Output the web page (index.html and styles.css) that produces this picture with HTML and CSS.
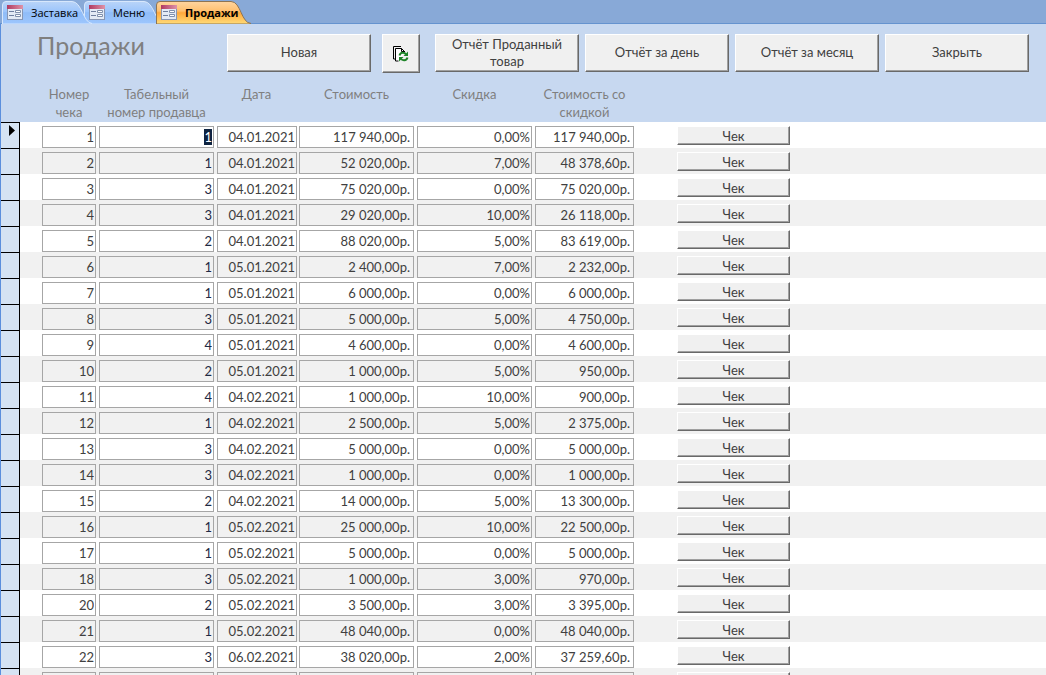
FILE: index.html
```html
<!DOCTYPE html>
<html lang="ru">
<head>
<meta charset="utf-8">
<title>Продажи</title>
<link rel="stylesheet" href="styles.css">
</head>
<body>
<svg class="defs" width="0" height="0" aria-hidden="true">
  <defs>
    <linearGradient id="tab-blue" x1="0" y1="0" x2="0" y2="1">
      <stop offset="0" stop-color="#b9d4f8"/><stop offset=".45" stop-color="#9cc5fc"/><stop offset=".5" stop-color="#8fbcf8"/><stop offset="1" stop-color="#9dc6fd"/>
    </linearGradient>
    <linearGradient id="tab-orange" x1="0" y1="0" x2="0" y2="1">
      <stop offset="0" stop-color="#ffd5a0"/><stop offset=".42" stop-color="#ffc070"/><stop offset=".5" stop-color="#ffa83c"/><stop offset="1" stop-color="#ffdc78"/>
    </linearGradient>
    <linearGradient id="form-cap" x1="0" y1="0" x2="1" y2="0">
      <stop offset="0" stop-color="#b03a62"/><stop offset="1" stop-color="#de93a8"/>
    </linearGradient>
    <symbol id="form-icon" viewBox="0 0 16 15">
      <rect x=".5" y=".5" width="15" height="14" fill="#e3eaf5" stroke="#8796b3"/>
      <rect width="16" height="4" fill="url(#form-cap)"/>
      <path d="M2 6.500h5M2 10.500h5" stroke="#6f7f9f"/>
      <path d="M8.500 5.500h5v2h-5zM8.500 9.500h5v2h-5z" fill="#fff" stroke="#8090ac"/>
    </symbol>
  </defs>
</svg>

<nav class="tabs" aria-label="Открытые формы">
  <button class="tab tab-first" type="button">
    <svg class="tab-shape" viewBox="0 0 90 24" preserveAspectRatio="none" aria-hidden="true"><path d="M.5 24V5Q.5 1.500 4 1.500H70C80 1.500 81 23 90 23.500V24Z" fill="url(#tab-blue)" stroke="#d7e7fc"/></svg>
    <svg class="tab-icon" aria-hidden="true"><use href="#form-icon"/></svg>
    <span>Заставка</span>
  </button>
  <button class="tab tab-second" type="button">
    <svg class="tab-shape" viewBox="0 0 80 24" preserveAspectRatio="none" aria-hidden="true"><path d="M.5 24V5Q.5 1.500 4 1.500H60C70 1.500 71 23 80 23.500V24Z" fill="url(#tab-blue)" stroke="#d7e7fc"/></svg>
    <svg class="tab-icon" aria-hidden="true"><use href="#form-icon"/></svg>
    <span>Меню</span>
  </button>
  <button class="tab tab-active" type="button" aria-current="page">
    <svg class="tab-shape" viewBox="0 0 95 24" preserveAspectRatio="none" aria-hidden="true"><path d="M.5 24V5Q.5 1.500 4 1.500H75C85 1.500 85 23 95 23.500V24Z" fill="url(#tab-orange)" stroke="#8e7452"/></svg>
    <svg class="tab-icon" aria-hidden="true"><use href="#form-icon"/></svg>
    <span>Продажи</span>
  </button>
</nav>

<main class="form">
  <header class="form-header">
    <h1 class="title">Продажи</h1>
    <div class="toolbar">
      <button class="command" type="button">Новая</button>
      <button class="command command-icon" type="button" aria-label="Обновить">
        <svg width="18" height="18" viewBox="0 0 18 18" fill="none" aria-hidden="true">
          <path d="M3 14H1.500V1.500H9" stroke="#000"/>
          <path d="M6.500 16H3.500V3.500H9.500L13 7" fill="#fff" stroke="#000"/>
          <path d="M9.500 3.500V6.500H12.500" stroke="#000"/>
          <path d="M7.500 10.500C8.500 7 12.500 7 14 9.500M15.500 12.500C14.500 16 10.500 16 8.500 13.500" stroke="#1e8428" stroke-width="2"/>
          <path d="M16 6.500V11H11.500ZM7 16.500V12H11.500Z" fill="#1e8428"/>
        </svg>
      </button>
      <button class="command" type="button">Отчёт Проданный товар</button>
      <button class="command" type="button">Отчёт за день</button>
      <button class="command" type="button">Отчёт за месяц</button>
      <button class="command" type="button">Закрыть</button>
    </div>
  </header>

  <table class="records">
    <colgroup>
      <col class="col-selector"><col class="col-number"><col class="col-wide"><col class="col-date"><col class="col-wide"><col class="col-wide"><col class="col-total"><col>
    </colgroup>
    <thead>
      <tr>
        <td></td>
        <th class="head-number" scope="col">Номер чека</th>
        <th scope="col">Табельный<br>номер продавца</th>
        <th scope="col">Дата</th>
        <th scope="col">Стоимость</th>
        <th scope="col">Скидка</th>
        <th scope="col">Стоимость со скидкой</th>
        <td></td>
      </tr>
    </thead>
    <tbody id="records"></tbody>
  </table>
</main>
<script src="records.js"></script>
</body>
</html>
```

FILE: styles.css
```css
* {
  box-sizing: border-box;
}

body {
  margin: 0;
  height: 100vh;
  overflow: hidden;
  display: flex;
  flex-direction: column;
  background: #fff;
  color: #404040;
  font-family: Lato, "Open Sans", sans-serif;
  font-size: 13px;
}

.defs {
  position: absolute;
}

.tabs {
  flex: none;
  display: flex;
  height: 24px;
  padding-left: 2px;
  background: #88a9d7;
  border-bottom: 1px solid #6593cf;
}

.tab {
  position: relative;
  display: flex;
  align-items: center;
  gap: 8px;
  height: 24px;
  padding: 0 0 0 5px;
  border: 0;
  background: none;
  color: #000;
  font: 11px "Open Sans", "Noto Sans", sans-serif;
  text-align: left;
}

.tab-first {
  z-index: 2;
  width: 90px;
}

.tab-second {
  z-index: 1;
  width: 80px;
  margin-left: -8px;
}

.tab-active {
  z-index: 3;
  width: 95px;
  margin-left: -8px;
  font-weight: 700;
}

.tab-shape {
  position: absolute;
  inset: 0;
  width: 100%;
  height: 100%;
}

.tab-icon {
  position: relative;
  flex: none;
  width: 16px;
  height: 15px;
}

.tab span {
  position: relative;
}

.form {
  flex: 1;
  min-height: 0;
  overflow: hidden;
  border-left: 1px solid #5b8fdd;
}

.form-header {
  display: flex;
  align-items: flex-start;
  height: 61px;
  padding: 10px 0 0 36px;
  background: #c7d8f0;
}

.title {
  width: 190px;
  margin: 0;
  color: #7f7f7f;
  font-size: 25px;
  font-weight: 400;
  line-height: 22px;
}

.toolbar {
  display: flex;
  gap: 6px;
}

.command {
  width: 144px;
  height: 38px;
  padding: 0 10px 1px;
  border: 1px solid;
  border-color: #fff #696969 #696969 #fff;
  box-shadow: inset -1px -1px #a0a0a0;
  background: #f0f0f0;
  color: #404040;
  font: inherit;
  line-height: 17px;
}

.command-icon {
  display: flex;
  align-items: center;
  justify-content: center;
  width: 38px;
  height: 39px;
  margin: 0 9px 0 5px;
  padding: 0;
}

.records {
  width: 100%;
  table-layout: fixed;
  border-collapse: separate;
  border-spacing: 0;
}

.col-selector { width: 19px; }
.col-number { width: 79px; }
.col-wide { width: 118px; }
.col-date { width: 82px; }
.col-total { width: 102px; }

.records thead {
  background: #c7d8f0;
}

.records th {
  height: 37px;
  padding: 0 3px 0 0;
  color: #7f7f7f;
  font-weight: 400;
  line-height: 18px;
  vertical-align: top;
}

.records .head-number {
  padding-left: 22px;
}

.records tbody tr {
  height: 26px;
}

.records tbody tr:nth-child(even) {
  background: #f1f1f1;
}

.records tbody td {
  height: 26px;
  padding: 4px 3px 0 0;
  line-height: 0;
  vertical-align: top;
}

.records tbody .selector {
  padding: 2px 0 0 8px;
  border-top: 1px solid #000;
  border-right: 1px solid #000;
  background: #d5e3f3;
}

.records tbody .number {
  padding-left: 22px;
}

.records tbody .date {
  padding-right: 2px;
}

.field {
  width: 100%;
  height: 22px;
  padding: 0 1px 1px;
  border: 1px solid #a6a6a6;
  outline: 0;
  background: transparent;
  color: #404040;
  font: inherit;
  line-height: 18px;
  text-align: right;
}

.field-money {
  padding-right: 3px;
}

.field-seller {
  color: #1f2a44;
}

.field::selection {
  background: #0e2340;
  color: #fff;
}

.records tbody .action {
  padding-left: 40px;
}

.receipt {
  display: block;
  width: 113px;
  height: 19px;
  padding: 2px 0 0;
  border: 1px solid;
  border-color: #fff #696969 #696969 #fff;
  box-shadow: inset -1px -1px #a0a0a0;
  background: #f0f0f0;
  color: #404040;
  font: inherit;
  line-height: 15px;
}
```

FILE: records.js
```js
const records = [
  ["1", "1", "04.01.2021", "117 940,00р.", "0,00%", "117 940,00р."],
  ["2", "1", "04.01.2021", "52 020,00р.", "7,00%", "48 378,60р."],
  ["3", "3", "04.01.2021", "75 020,00р.", "0,00%", "75 020,00р."],
  ["4", "3", "04.01.2021", "29 020,00р.", "10,00%", "26 118,00р."],
  ["5", "2", "04.01.2021", "88 020,00р.", "5,00%", "83 619,00р."],
  ["6", "1", "05.01.2021", "2 400,00р.", "7,00%", "2 232,00р."],
  ["7", "1", "05.01.2021", "6 000,00р.", "0,00%", "6 000,00р."],
  ["8", "3", "05.01.2021", "5 000,00р.", "5,00%", "4 750,00р."],
  ["9", "4", "05.01.2021", "4 600,00р.", "0,00%", "4 600,00р."],
  ["10", "2", "05.01.2021", "1 000,00р.", "5,00%", "950,00р."],
  ["11", "4", "04.02.2021", "1 000,00р.", "10,00%", "900,00р."],
  ["12", "1", "04.02.2021", "2 500,00р.", "5,00%", "2 375,00р."],
  ["13", "3", "04.02.2021", "5 000,00р.", "0,00%", "5 000,00р."],
  ["14", "3", "04.02.2021", "1 000,00р.", "0,00%", "1 000,00р."],
  ["15", "2", "04.02.2021", "14 000,00р.", "5,00%", "13 300,00р."],
  ["16", "1", "05.02.2021", "25 000,00р.", "10,00%", "22 500,00р."],
  ["17", "1", "05.02.2021", "5 000,00р.", "0,00%", "5 000,00р."],
  ["18", "3", "05.02.2021", "1 000,00р.", "3,00%", "970,00р."],
  ["20", "2", "05.02.2021", "3 500,00р.", "3,00%", "3 395,00р."],
  ["21", "1", "05.02.2021", "48 040,00р.", "0,00%", "48 040,00р."],
  ["22", "3", "06.02.2021", "38 020,00р.", "2,00%", "37 259,60р."],
  ["", "", "", "", "", ""]
];

const columns = [
  { label: "Номер чека", cell: "number", field: "" },
  { label: "Табельный номер продавца", cell: "", field: "field-seller" },
  { label: "Дата", cell: "date", field: "" },
  { label: "Стоимость", cell: "", field: "field-money" },
  { label: "Скидка", cell: "", field: "" },
  { label: "Стоимость со скидкой", cell: "", field: "field-money" }
];

const marker = '<svg width="7" height="12" viewBox="0 0 7 12" aria-hidden="true"><path d="M0 0l6 5.500L0 11z" fill="#000"/></svg>';

document.getElementById("records").innerHTML = records.map((record, row) => {
  const cells = columns.map((column, i) =>
    `<td class="${column.cell}"><input class="field ${column.field}" type="text" aria-label="${column.label}" value="${record[i]}"></td>`
  ).join("");
  return `<tr><td class="selector">${row === 0 ? marker : ""}</td>${cells}<td class="action"><button class="receipt" type="button" aria-label="Чек">${record[0] ? "Чек" : ""}</button></td></tr>`;
}).join("");

const current = document.querySelector(".field-seller");
current.focus({ preventScroll: true });
current.select();
```
